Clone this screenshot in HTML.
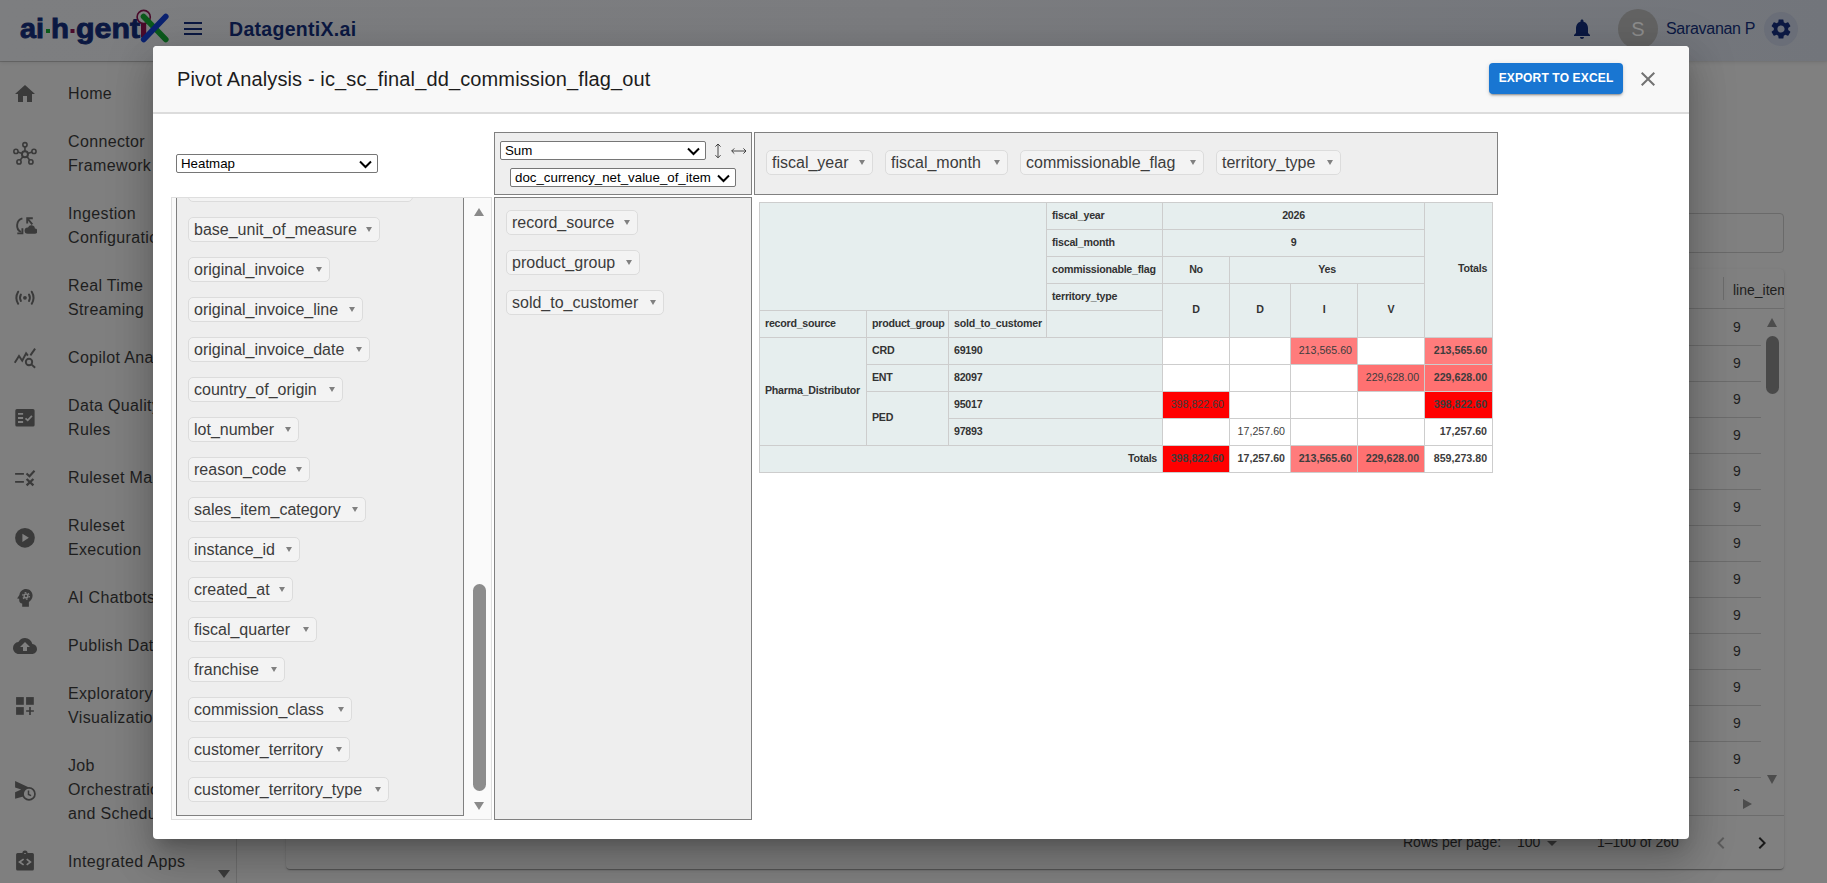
<!DOCTYPE html>
<html><head><meta charset="utf-8"><style>
*{box-sizing:border-box;margin:0;padding:0}
html,body{width:1827px;height:883px;overflow:hidden}
body{position:relative;background:#7d7d7d;font-family:"Liberation Sans",sans-serif;color:#1c1c1c}
.abs{position:absolute}
#hdr{position:absolute;left:0;top:0;width:1827px;height:61px;background:linear-gradient(90deg,#7d7e80 0%,#7b7c7f 50%,#72757b 100%);box-shadow:0 1px 4px rgba(0,0,0,.12);z-index:2}
#side{position:absolute;left:0;top:61px;width:237px;height:822px;background:#7f7f7f;border-right:1px solid #6f6f6f;border-top:1px solid #6a6a6a}
.nav{position:absolute;left:68px;font-size:16px;line-height:24px;color:#1e1e1e;white-space:nowrap;letter-spacing:0.35px}
.nic{position:absolute;left:15px;width:20px;height:20px}
#main{position:absolute;left:237px;top:62px;width:1590px;height:821px;background:#808080}
#modal{position:absolute;z-index:10;left:153px;top:46px;width:1536px;height:793px;background:#fff;border-radius:4px;box-shadow:0 11px 15px -7px rgba(0,0,0,.2),0 24px 38px 3px rgba(0,0,0,.14),0 9px 46px 8px rgba(0,0,0,.12);overflow:hidden}
#mh{position:absolute;left:0;top:0;width:1536px;height:68px;background:#f8f8f8;border-bottom:2px solid #dcdcdc}
#title{position:absolute;left:24px;top:20px;font-size:20px;line-height:26px;color:#1c1c1c;white-space:nowrap;letter-spacing:0.13px}
#exp{position:absolute;left:1336px;top:17px;width:134px;height:31px;background:#1976d2;border-radius:4px;box-shadow:0 3px 1px -2px rgba(0,0,0,.2),0 2px 2px 0 rgba(0,0,0,.14),0 1px 5px 0 rgba(0,0,0,.12);color:#fff;font-size:12px;font-weight:bold;line-height:31px;text-align:center;letter-spacing:0.15px}
.box{position:absolute;border:1px solid #808080;background:#eee}
.chip{position:absolute;height:25px;border:1px solid #dcdcdc;background:#f3f3f3;border-radius:5px;font-size:16px;line-height:22px;padding-left:5px;padding-top:1px;color:#3c3c3c;white-space:nowrap}
.chip i{position:absolute;right:7px;top:9px;width:0;height:0;border-left:3px solid transparent;border-right:3px solid transparent;border-top:5.5px solid #808080}
.sel{position:absolute;background:#fff;border:1px solid #767676;border-radius:2px;font-size:13.3px;color:#000;line-height:17px;padding-left:4px;white-space:nowrap}
.sel svg{position:absolute;right:5px;top:5px}
table.pvt{position:absolute;left:606px;top:156px;width:734px;border-collapse:collapse;table-layout:fixed;font-size:10.67px;line-height:16px}
table.pvt th{letter-spacing:-0.25px;background:#e6eeee;border:1px solid #cdcdcd;padding:4px 5px 6px 5px;font-weight:bold;color:#333;text-align:left;white-space:nowrap;overflow:hidden}
table.pvt td{background:#fff;border:1px solid #cdcdcd;padding:4px 5px 6px 5px;color:#3d3d3d;text-align:right;white-space:nowrap;vertical-align:top}
table.pvt .c{text-align:center}
table.pvt .r{text-align:right}
table.pvt .m{vertical-align:middle;padding-top:3px;padding-bottom:7px}
table.pvt .b{font-weight:bold}
</style></head><body>
<div id="hdr"><svg class="abs" style="left:0;top:0" width="180" height="62" viewBox="0 0 180 62">
<g fill="#0b1842" stroke="#0b1842" stroke-width="0.9" font-family="Liberation Sans" font-weight="bold" font-size="27">
<text x="20" y="38" textLength="24" lengthAdjust="spacingAndGlyphs">ai</text>
<text x="51" y="38" textLength="18" lengthAdjust="spacingAndGlyphs">h</text>
<text x="76" y="38" textLength="64" lengthAdjust="spacingAndGlyphs">gent</text>
</g>
<rect x="46" y="29" width="4" height="4" fill="#0a5a1a"/>
<rect x="70.5" y="29" width="4" height="4" fill="#4a0a2a"/>
<rect x="141" y="24" width="5.2" height="13.5" fill="#4a0a2a"/>
<circle cx="143.7" cy="17" r="6.6" fill="none" stroke="#4a0a2a" stroke-width="1.6"/>
<path d="M143.5 16.5L165.8 39.5" stroke="#0b5a1c" stroke-width="5.6" stroke-linecap="round"/>
<path d="M165.8 16.5L143.7 39.5" stroke="#0b2270" stroke-width="5.6" stroke-linecap="round"/>
</svg>
<div class="abs" style="left:184px;top:22px;width:18px;height:2.2px;background:#0b1842"></div>
<div class="abs" style="left:184px;top:28px;width:18px;height:2.2px;background:#0b1842"></div>
<div class="abs" style="left:184px;top:33px;width:18px;height:2.2px;background:#0b1842"></div>
<div class="abs" style="left:229px;top:17px;font-size:19.5px;line-height:24px;font-weight:bold;color:#0b1842;letter-spacing:0.3px">DatagentiX.ai</div>
<svg class="abs" style="left:1570px;top:17px" width="24" height="24" viewBox="0 0 24 24"><path fill="#0b1842" d="M12 22c1.1 0 2-.9 2-2h-4c0 1.1.89 2 2 2zm6-6v-5c0-3.07-1.64-5.64-4.5-6.32V4c0-.83-.67-1.5-1.5-1.5s-1.5.67-1.5 1.5v.68C7.63 5.36 6 7.92 6 11v5l-2 2v1h16v-1l-2-2z"/></svg>
<div class="abs" style="left:1618px;top:9px;width:40px;height:40px;border-radius:50%;background:#636363;color:#8c8c8c;font-size:20px;line-height:40px;text-align:center">S</div>
<div class="abs" style="left:1666px;top:18px;font-size:16px;line-height:22px;color:#0b1842;letter-spacing:-0.3px">Saravanan P</div>
<div class="abs" style="left:1764px;top:12px;width:34px;height:34px;border-radius:50%;background:#6a6e78"></div>
<svg class="abs" style="left:1769px;top:17px" width="24" height="24" viewBox="0 0 24 24"><path fill="#0b1842" d="M19.14 12.94c.04-.3.06-.61.06-.94 0-.32-.02-.64-.07-.94l2.03-1.58a.49.49 0 0 0 .12-.61l-1.92-3.32a.488.488 0 0 0-.59-.22l-2.39.96c-.5-.38-1.03-.7-1.62-.94l-.36-2.54a.484.484 0 0 0-.48-.41h-3.84c-.24 0-.43.17-.47.41l-.36 2.54c-.59.24-1.13.57-1.62.94l-2.39-.96c-.22-.08-.47 0-.59.22L2.74 8.87c-.12.21-.08.47.12.61l2.03 1.58c-.05.3-.09.63-.09.94s.02.64.07.94l-2.03 1.58a.49.49 0 0 0-.12.61l1.92 3.32c.12.22.37.29.59.22l2.39-.96c.5.38 1.03.7 1.62.94l.36 2.54c.05.24.24.41.48.41h3.84c.24 0 .44-.17.47-.41l.36-2.54c.59-.24 1.13-.56 1.62-.94l2.39.96c.22.08.47 0 .59-.22l1.92-3.32c.12-.22.07-.47-.12-.61l-2.01-1.58zM12 15.6c-1.98 0-3.6-1.62-3.6-3.6s1.62-3.6 3.6-3.6 3.6 1.62 3.6 3.6-1.62 3.6-3.6 3.6z"/></svg>
</div>
<div id="side"><svg class="abs" style="left:13px;top:20px" width="24" height="24" viewBox="0 0 24 24"><path fill="#3a3a3a" d="M10 20v-6h4v6h5v-8h3L12 3 2 12h3v8z"/></svg><div class="nav" style="top:20px">Home</div><svg class="abs" style="left:13px;top:79px" width="24" height="24" viewBox="0 0 24 24"><g fill="none" stroke="#3a3a3a"><circle cx="11.95" cy="13.27" r="3" stroke-width="2"/><g stroke-width="1.6"><circle cx="11.95" cy="3.76" r="2.1"/><circle cx="2.95" cy="10.4" r="2.1"/><circle cx="20.96" cy="10.4" r="2.1"/><circle cx="6" cy="20.9" r="2.1"/><circle cx="17.9" cy="20.9" r="2.1"/><path d="M11.95 5.9v4.3M5 11.1l4 1.3M18.9 11.1l-4 1.3M7.3 19.1l2.5-3.3M16.6 19.1l-2.5-3.3"/></g></g></svg><div class="nav" style="top:68px">Connector<br>Framework</div><svg class="abs" style="left:13px;top:151px" width="24" height="24" viewBox="0 0 24 24"><path fill="#3a3a3a" d="M14.6 20.8h7a2.6 2.6 0 0 0 .3-5.2 3.6 3.6 0 0 0-6.9-1.2 3.2 3.2 0 0 0-.4 6.4z"/><g fill="none" stroke="#3a3a3a" stroke-width="1.9"><path d="M9.4 5.4a7.4 7.4 0 0 0-1.4 13.6"/><path d="M4.3 20.4h5.1v-5.1"/><path d="M14.2 10.6V5.2h5.6M14.5 5.5l4.8 5.9"/></g></svg><div class="nav" style="top:140px">Ingestion<br>Configuration</div><svg class="abs" style="left:13px;top:223px" width="24" height="24" viewBox="0 0 24 24"><g fill="none" stroke="#3a3a3a" stroke-width="2" stroke-linecap="round"><path d="M5.15 6.7Q1.6 12.8 5.15 18.7M18.75 6.7Q22.3 12.8 18.75 18.7M7.9 9.6Q6.1 12.8 7.9 16M16 9.6Q17.8 12.8 16 16"/></g><circle cx="11.95" cy="12.8" r="1.9" fill="#3a3a3a"/></svg><div class="nav" style="top:212px">Real Time<br>Streaming</div><svg class="abs" style="left:13px;top:283px" width="24" height="24" viewBox="0 0 24 24"><g fill="none" stroke="#3a3a3a" stroke-width="1.9"><path d="M1.75 17.7L6 10.9 9.2 15.7 13.1 8.2 14.9 10.6"/><path d="M17.4 10.4L22.1 3.6"/><circle cx="16" cy="17" r="3.2"/><path d="M18.4 19.4l3.7 3.4"/></g></svg><div class="nav" style="top:284px">Copilot Analytics</div><svg class="abs" style="left:13px;top:343px" width="24" height="24" viewBox="0 0 24 24"><rect x="2.3" y="4.1" width="19.3" height="17.4" rx="1.6" fill="#3a3a3a"/><g stroke="#808080" fill="none"><path d="M5 8.9h5.1M5 13h5.1M5 17h5.1" stroke-width="1.9"/><path d="M12.5 13.3l2.2 2 4.2-4.5" stroke-width="1.8"/></g></svg><div class="nav" style="top:332px">Data Quality<br>Rules</div><svg class="abs" style="left:13px;top:403px" width="24" height="24" viewBox="0 0 24 24"><g fill="none" stroke="#3a3a3a"><path d="M2.1 8.9h8.8M2.1 16.9h8.8" stroke-width="1.9"/><path d="M13.5 8.4l3 2.9 5-5.6" stroke-width="2.1"/><path d="M13.6 14l6.8 6.4M20.4 14l-6.8 6.4" stroke-width="2.3"/></g></svg><div class="nav" style="top:404px">Ruleset Management</div><svg class="abs" style="left:13px;top:463px" width="24" height="24" viewBox="0 0 24 24"><circle cx="11.95" cy="12.8" r="9.85" fill="#3a3a3a"/><path d="M9.4 8.7v8.3l6.5-4.2z" fill="#808080"/></svg><div class="nav" style="top:452px">Ruleset<br>Execution</div><svg class="abs" style="left:13px;top:523px" width="24" height="24" viewBox="0 0 24 24"><path fill="#3a3a3a" d="M13 4C16.8 4 19.6 6.9 19.6 10.6 19.6 13.4 18 15.8 15.9 17V21.8H9.2V18.5C7.3 18.3 6.2 17 6.2 15.2V13.8L4.1 13.6 6.4 10C6.9 6.5 9.6 4 13 4Z"/><circle cx="13" cy="10.9" r="2.6" fill="#808080"/><circle cx="13" cy="10.9" r="3.3" fill="none" stroke="#808080" stroke-width="1.3" stroke-dasharray="1.7 1.75"/><circle cx="13" cy="10.9" r="1.1" fill="#3a3a3a"/></svg><div class="nav" style="top:524px">AI Chatbots</div><svg class="abs" style="left:13px;top:572px" width="24" height="24" viewBox="0 0 24 24"><path fill="#3a3a3a" d="M19.35 10.04A7.49 7.49 0 0 0 12 4C9.11 4 6.6 5.64 5.35 8.04A5.994 5.994 0 0 0 0 14c0 3.31 2.69 6 6 6h13c2.76 0 5-2.24 5-5 0-2.64-2.05-4.78-4.65-4.96zM14 13v4h-4v-4H7l5-5 5 5h-3z"/></svg><div class="nav" style="top:572px">Publish Data</div><svg class="abs" style="left:13px;top:632px" width="24" height="24" viewBox="0 0 24 24"><g fill="#3a3a3a"><rect x="3.1" y="3.1" width="7.7" height="7.7"/><rect x="13.1" y="3.1" width="7.7" height="7.7"/><rect x="3.1" y="13.1" width="7.7" height="7.7"/><path d="M16.15 13.1h1.7v3.05h3.05v1.7h-3.05v3.05h-1.7v-3.05h-3.05v-1.7h3.05z"/></g></svg><div class="nav" style="top:620px">Exploratory<br>Visualization</div><svg class="abs" style="left:13px;top:715px" width="24" height="24" viewBox="0 0 24 24"><path fill="#3a3a3a" d="M2.1 4.1L15.5 10.2 10.8 13.5 10.2 19.6 2.1 21.8V15.3L8.2 12.6 2.1 10.6Z"/><circle cx="16" cy="16.9" r="5.95" fill="#808080" stroke="#3a3a3a" stroke-width="1.7"/><path d="M15.5 13.6v3.8l2.6 1.2" fill="none" stroke="#3a3a3a" stroke-width="1.5"/></svg><div class="nav" style="top:692px">Job<br>Orchestration<br>and Scheduling</div><svg class="abs" style="left:13px;top:787px" width="24" height="24" viewBox="0 0 24 24"><path fill="#3a3a3a" d="M4.6 4h4.8a2.6 2.6 0 0 1 5.2 0h4.8a1.5 1.5 0 0 1 1.5 1.5v14.6a1.5 1.5 0 0 1-1.5 1.5H4.6a1.5 1.5 0 0 1-1.5-1.5V5.5A1.5 1.5 0 0 1 4.6 4z"/><ellipse cx="12" cy="4.5" rx="1" ry="0.6" fill="#808080"/><path d="M10.6 10.1L6.5 13l4.1 2.9M13.7 10.1l3.7 2.9-3.7 2.9" fill="none" stroke="#808080" stroke-width="1.7"/></svg><div class="nav" style="top:788px">Integrated Apps</div><div class="abs" style="left:218px;top:808px;width:0;height:0;border-left:6px solid transparent;border-right:6px solid transparent;border-top:8px solid #3c3c3c"></div></div>
<div id="main">
<div class="abs" style="left:49px;top:151px;width:1498px;height:40px;border:1px solid #6a6a6a;border-radius:4px"></div>
<div class="abs" style="left:49px;top:207px;width:1498px;height:600px;background:#808080;border-radius:4px;box-shadow:0 2px 1px -1px rgba(0,0,0,.2),0 1px 1px 0 rgba(0,0,0,.14),0 1px 3px 0 rgba(0,0,0,.12);overflow:hidden">
  <div class="abs" style="left:0;top:39px;width:1499px;height:1px;background:#6c6c6c"></div>
  <div class="abs" style="left:1437px;top:8px;width:1px;height:23px;background:#6c6c6c"></div>
  <div class="abs" style="left:1447px;top:11px;font-size:14px;line-height:20px;color:#1e1e1e;width:60px;overflow:hidden;white-space:nowrap">line_item</div>
  <div class="abs" style="left:0;top:546px;width:1499px;height:1px;background:#6c6c6c"></div>
  <div class="abs" style="left:1117px;top:563px;font-size:14px;line-height:20px;color:#1e1e1e;white-space:nowrap">Rows per page:</div>
  <div class="abs" style="left:1231px;top:563px;font-size:14px;line-height:20px;color:#1e1e1e">100</div>
  <div class="abs" style="left:1261px;top:572px;width:0;height:0;border-left:5px solid transparent;border-right:5px solid transparent;border-top:5px solid #3a3a3a"></div>
  <div class="abs" style="left:1311px;top:563px;font-size:14px;line-height:20px;color:#1e1e1e;white-space:nowrap">1–100 of 260</div>
  <svg class="abs" style="left:1423px;top:562px" width="24" height="24" viewBox="0 0 24 24"><path d="M15.4 7.4L14 6l-6 6 6 6 1.4-1.4L10.8 12z" fill="#5c5c5c"/></svg>
  <svg class="abs" style="left:1464px;top:562px" width="24" height="24" viewBox="0 0 24 24"><path d="M10 6L8.6 7.4 13.2 12l-4.6 4.6L10 18l6-6z" fill="#1a1a1a"/></svg>
</div>
<div class="abs" style="left:1400px;top:283px;width:124px;height:1px;background:#6c6c6c"></div><div class="abs" style="left:1400px;top:319px;width:124px;height:1px;background:#6c6c6c"></div><div class="abs" style="left:1400px;top:355px;width:124px;height:1px;background:#6c6c6c"></div><div class="abs" style="left:1400px;top:391px;width:124px;height:1px;background:#6c6c6c"></div><div class="abs" style="left:1400px;top:427px;width:124px;height:1px;background:#6c6c6c"></div><div class="abs" style="left:1400px;top:463px;width:124px;height:1px;background:#6c6c6c"></div><div class="abs" style="left:1400px;top:499px;width:124px;height:1px;background:#6c6c6c"></div><div class="abs" style="left:1400px;top:535px;width:124px;height:1px;background:#6c6c6c"></div><div class="abs" style="left:1400px;top:571px;width:124px;height:1px;background:#6c6c6c"></div><div class="abs" style="left:1400px;top:607px;width:124px;height:1px;background:#6c6c6c"></div><div class="abs" style="left:1400px;top:643px;width:124px;height:1px;background:#6c6c6c"></div><div class="abs" style="left:1400px;top:679px;width:124px;height:1px;background:#6c6c6c"></div><div class="abs" style="left:1400px;top:715px;width:124px;height:1px;background:#6c6c6c"></div><div class="abs" style="left:1496px;top:255px;font-size:14px;line-height:20px;color:#1e1e1e">9</div><div class="abs" style="left:1496px;top:291px;font-size:14px;line-height:20px;color:#1e1e1e">9</div><div class="abs" style="left:1496px;top:327px;font-size:14px;line-height:20px;color:#1e1e1e">9</div><div class="abs" style="left:1496px;top:363px;font-size:14px;line-height:20px;color:#1e1e1e">9</div><div class="abs" style="left:1496px;top:399px;font-size:14px;line-height:20px;color:#1e1e1e">9</div><div class="abs" style="left:1496px;top:435px;font-size:14px;line-height:20px;color:#1e1e1e">9</div><div class="abs" style="left:1496px;top:471px;font-size:14px;line-height:20px;color:#1e1e1e">9</div><div class="abs" style="left:1496px;top:507px;font-size:14px;line-height:20px;color:#1e1e1e">9</div><div class="abs" style="left:1496px;top:543px;font-size:14px;line-height:20px;color:#1e1e1e">9</div><div class="abs" style="left:1496px;top:579px;font-size:14px;line-height:20px;color:#1e1e1e">9</div><div class="abs" style="left:1496px;top:615px;font-size:14px;line-height:20px;color:#1e1e1e">9</div><div class="abs" style="left:1496px;top:651px;font-size:14px;line-height:20px;color:#1e1e1e">9</div><div class="abs" style="left:1496px;top:687px;font-size:14px;line-height:20px;color:#1e1e1e">9</div>
<div class="abs" style="left:1530px;top:256px;width:0;height:0;border-left:5.5px solid transparent;border-right:5.5px solid transparent;border-bottom:9px solid #4c4c4c"></div>
<div class="abs" style="left:1529px;top:274px;width:13px;height:58px;border-radius:6.5px;background:#494949"></div>
<div class="abs" style="left:1530px;top:713px;width:0;height:0;border-left:5.5px solid transparent;border-right:5.5px solid transparent;border-top:9px solid #4c4c4c"></div>
<div class="abs" style="left:1506px;top:737px;width:0;height:0;border-top:5.5px solid transparent;border-bottom:5.5px solid transparent;border-left:9px solid #4c4c4c"></div>
<div class="abs" style="left:1496px;top:727px;width:20px;height:2px;overflow:hidden"><div style="font-size:14px;line-height:20px;color:#1e1e1e;margin-top:-5px">9</div></div>
</div>

<div id="modal">
  <div id="mh">
    <div id="title">Pivot Analysis - ic_sc_final_dd_commission_flag_out</div>
    <div id="exp">EXPORT TO EXCEL</div>
    <svg class="abs" style="left:1483px;top:21px" width="24" height="24" viewBox="0 0 24 24"><path fill="#727272" d="M19 6.41L17.59 5 12 10.59 6.41 5 5 6.41 10.59 12 5 17.59 6.41 19 12 13.41 17.59 19 19 17.59 13.41 12z"/></svg>
  </div>
  <div class="sel" style="left:23px;top:108px;width:202px;height:19px">Heatmap<svg width="13" height="9" viewBox="0 0 13 9"><path d="M1 1.5 L6.5 7 L12 1.5" fill="none" stroke="#000" stroke-width="2"/></svg></div>
  <div class="box" style="left:341px;top:86px;width:258px;height:63px"></div>
  <div class="sel" style="left:347px;top:95px;width:206px;height:19px">Sum<svg width="13" height="9" viewBox="0 0 13 9"><path d="M1 1.5 L6.5 7 L12 1.5" fill="none" stroke="#000" stroke-width="2"/></svg></div>
  <svg class="abs" style="left:560px;top:96px" width="10" height="18" viewBox="0 0 10 18"><path d="M5 2.2v13.4M2.4 4.6L5 2 7.6 4.6M2.4 13.2L5 15.8 7.6 13.2" fill="none" stroke="#333" stroke-width="0.9"/></svg>
  <svg class="abs" style="left:577px;top:99px" width="18" height="12" viewBox="0 0 18 12"><path d="M1.7 6h14.3M4.3 3.4L1.7 6 4.3 8.6M13.4 3.4L16 6 13.4 8.6" fill="none" stroke="#333" stroke-width="0.9"/></svg>
  <div class="sel" style="left:357px;top:122px;width:226px;height:19px">doc_currency_net_value_of_item<svg width="13" height="9" viewBox="0 0 13 9"><path d="M1 1.5 L6.5 7 L12 1.5" fill="none" stroke="#000" stroke-width="2"/></svg></div>
  <div class="box" style="left:601px;top:86px;width:744px;height:63px"></div>
  <div class="abs" style="left:18px;top:151px;width:321px;height:623px;border:1px solid #dedede;background:#fafafa;overflow:hidden">
    <div class="abs" style="left:4px;top:-100px;width:288px;height:718px;border:1px solid #808080;background:#eee"></div>
<div class="chip" style="left:16px;top:-21px;width:225px"></div>
<div class="chip" style="left:16px;top:19px;width:192px">base_unit_of_measure<i></i></div>
<div class="chip" style="left:16px;top:59px;width:142px">original_invoice<i></i></div>
<div class="chip" style="left:16px;top:99px;width:175px">original_invoice_line<i></i></div>
<div class="chip" style="left:16px;top:139px;width:182px">original_invoice_date<i></i></div>
<div class="chip" style="left:16px;top:179px;width:155px">country_of_origin<i></i></div>
<div class="chip" style="left:16px;top:219px;width:111px">lot_number<i></i></div>
<div class="chip" style="left:16px;top:259px;width:122px">reason_code<i></i></div>
<div class="chip" style="left:16px;top:299px;width:178px">sales_item_category<i></i></div>
<div class="chip" style="left:16px;top:339px;width:112px">instance_id<i></i></div>
<div class="chip" style="left:16px;top:379px;width:105px">created_at<i></i></div>
<div class="chip" style="left:16px;top:419px;width:129px">fiscal_quarter<i></i></div>
<div class="chip" style="left:16px;top:459px;width:97px">franchise<i></i></div>
<div class="chip" style="left:16px;top:499px;width:164px">commission_class<i></i></div>
<div class="chip" style="left:16px;top:539px;width:162px">customer_territory<i></i></div>
<div class="chip" style="left:16px;top:579px;width:201px">customer_territory_type<i></i></div>

    <div class="abs" style="left:302px;top:10px;width:0;height:0;border-left:5.5px solid transparent;border-right:5.5px solid transparent;border-bottom:8.5px solid #8a8a8a"></div>
    <div class="abs" style="left:301px;top:386px;width:13px;height:207px;border-radius:7px;background:#8c8c8c"></div>
    <div class="abs" style="left:302px;top:604px;width:0;height:0;border-left:5.5px solid transparent;border-right:5.5px solid transparent;border-top:8.5px solid #8a8a8a"></div>
  </div>
  <div class="box" style="left:341px;top:151px;width:258px;height:623px"></div>
<div class="chip" style="left:353px;top:164px;width:132px">record_source<i></i></div>
<div class="chip" style="left:353px;top:204px;width:134px">product_group<i></i></div>
<div class="chip" style="left:353px;top:244px;width:158px">sold_to_customer<i></i></div>
<div class="chip" style="left:613px;top:104px;width:107px">fiscal_year<i></i></div>
<div class="chip" style="left:732px;top:104px;width:123px">fiscal_month<i></i></div>
<div class="chip" style="left:867px;top:104px;width:184px">commissionable_flag<i></i></div>
<div class="chip" style="left:1063px;top:104px;width:125px">territory_type<i></i></div>

<table class="pvt">
<colgroup><col style="width:107px"><col style="width:82px"><col style="width:98px"><col style="width:116px"><col style="width:67px"><col style="width:61px"><col style="width:67px"><col style="width:67px"><col style="width:68px"></colgroup>
<thead>
<tr><th colspan="3" rowspan="4"></th><th>fiscal_year</th><th colspan="4" class="c">2026</th><th rowspan="5" class="r m">Totals</th></tr>
<tr><th>fiscal_month</th><th colspan="4" class="c">9</th></tr>
<tr><th>commissionable_flag</th><th class="c">No</th><th colspan="3" class="c">Yes</th></tr>
<tr><th>territory_type</th><th rowspan="2" class="c m">D</th><th rowspan="2" class="c m">D</th><th rowspan="2" class="c m">I</th><th rowspan="2" class="c m">V</th></tr>
<tr><th>record_source</th><th>product_group</th><th>sold_to_customer</th><th></th></tr>
</thead>
<tbody>
<tr><th rowspan="4" class="m">Pharma_Distributor</th><th>CRD</th><th colspan="2">69190</th><td></td><td></td><td style="background:#ff7c7c">213,565.60</td><td></td><td class="b" style="background:#ff7c7c">213,565.60</td></tr>
<tr><th>ENT</th><th colspan="2">82097</th><td></td><td></td><td></td><td style="background:#ff7171">229,628.00</td><td class="b" style="background:#ff7171">229,628.00</td></tr>
<tr><th rowspan="2" class="m">PED</th><th colspan="2">95017</th><td style="background:#ff0000">398,822.60</td><td></td><td></td><td></td><td class="b" style="background:#ff0000">398,822.60</td></tr>
<tr><th colspan="2">97893</th><td></td><td>17,257.60</td><td></td><td></td><td class="b">17,257.60</td></tr>
<tr><th colspan="4" class="r">Totals</th><td class="b" style="background:#ff0000">398,822.60</td><td class="b">17,257.60</td><td class="b" style="background:#ff7c7c">213,565.60</td><td class="b" style="background:#ff7171">229,628.00</td><td class="b">859,273.80</td></tr>
</tbody></table>
</div>

</body></html>
